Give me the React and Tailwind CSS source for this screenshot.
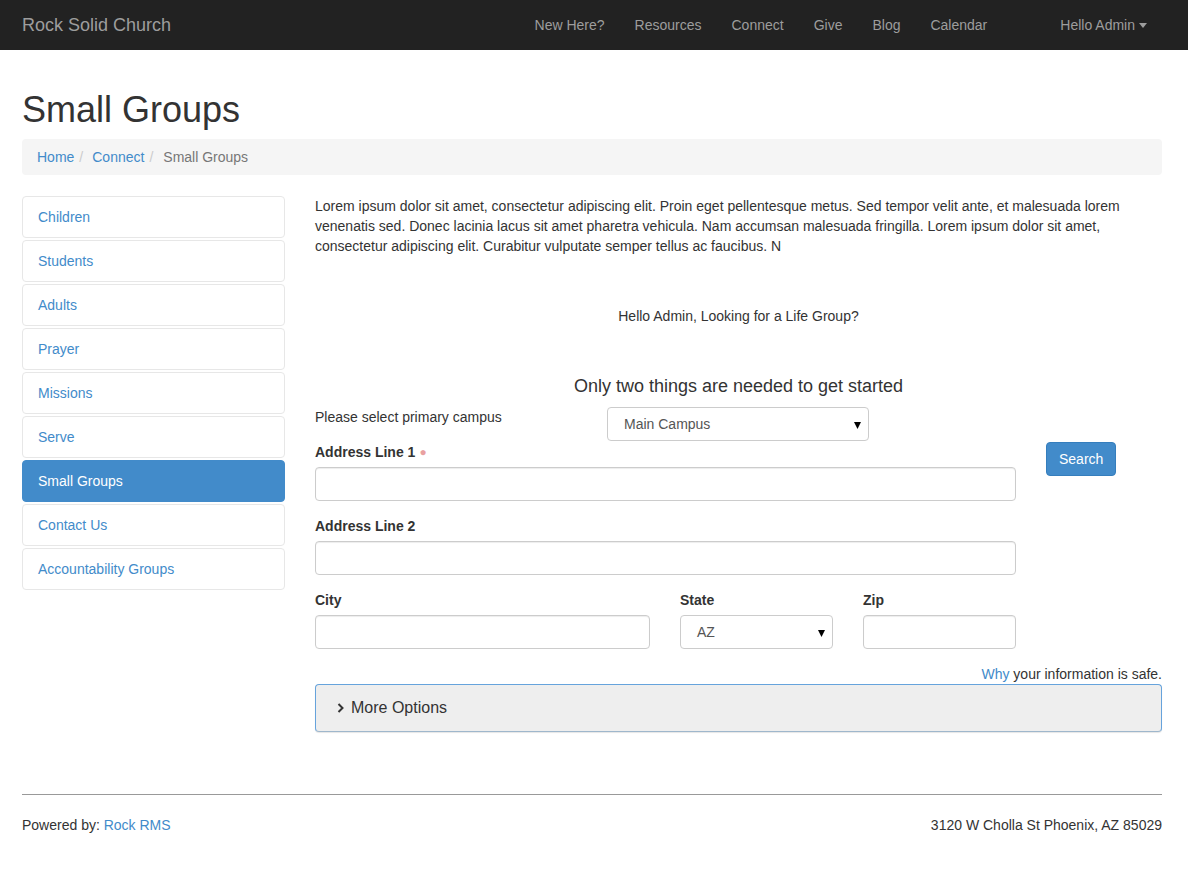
import React from 'react';

const navLinks = ['New Here?', 'Resources', 'Connect', 'Give', 'Blog', 'Calendar'];

const sideLinks = [
    'Children',
    'Students',
    'Adults',
    'Prayer',
    'Missions',
    'Serve',
    'Small Groups',
    'Contact Us',
    'Accountability Groups',
];

const Caret = ({ className = '' }) => (
    <svg width="8" height="5" viewBox="0 0 8 5" className={className}>
        <path d="M0 0 L8 0 L4 5 Z" fill="currentColor" />
    </svg>
);

const FakeSelect = ({ value, className = '' }) => (
    <div className={`relative h-[34px] border border-[#ccc] rounded-[4px] bg-white flex items-center pl-[16px] text-[#555] text-[14px] ${className}`}>
        <span>{value}</span>
        <span className="absolute right-[7px] top-[14px] text-black">
            <svg width="7" height="7" viewBox="0 0 7 7">
                <path d="M0 0 L7 0 L3.5 7 Z" fill="currentColor" />
            </svg>
        </span>
    </div>
);

const Input = ({ className = '' }) => (
    <input
        type="text"
        className={`block h-[34px] border border-[#ccc] rounded-[4px] bg-white px-3 shadow-[inset_0_1px_1px_rgba(0,0,0,0.075)] ${className}`}
    />
);

const Label = ({ children, required }) => (
    <label className="block font-bold text-[14px] leading-[20px] text-[#333] mb-[5px]">
        {children}
        {required && <span className="text-[#e9a1a1] ml-[4px] align-top text-[12px]">●</span>}
    </label>
);

const App = () => {
    return (
        <div className="min-h-screen bg-white font-['Liberation_Sans',Arial,sans-serif] text-[14px] leading-[20px] text-[#333]">
            {/* Navbar */}
            <div className="h-[50px] bg-[#222] flex items-center pl-[22px] pr-[41px]">
                <span className="text-[18px] text-[#9d9d9d]">Rock Solid Church</span>
                <div className="ml-auto flex items-center">
                    {navLinks.map((link) => (
                        <span key={link} className="px-[15px] text-[#9d9d9d]">
                            {link}
                        </span>
                    ))}
                    <span className="ml-[43px] pl-[15px] flex items-center gap-[4px] text-[#9d9d9d]">
                        Hello Admin
                        <Caret />
                    </span>
                </div>
            </div>

            <div className="ml-[22px] mr-[26px]">
                <h1 className="mt-[40px] text-[36px] leading-[40px] text-[#333] font-normal">Small Groups</h1>
                <div className="mt-[9px] h-[36px] bg-[#f5f5f5] rounded-[4px] px-[15px] flex items-center">
                    <span className="text-[#428bca]">Home</span>
                    <span className="px-[5px] text-[#ccc]">/</span>
                    <span className="ml-[4px] text-[#428bca]">Connect</span>
                    <span className="px-[5px] text-[#ccc]">/</span>
                    <span className="ml-[5px] text-[#777]">Small Groups</span>
                </div>

                <div className="mt-[21px] flex gap-[30px]">
                    {/* Sidebar */}
                    <div className="w-[263px] shrink-0 flex flex-col gap-[2px]">
                        {sideLinks.map((link) =>
                            link === 'Small Groups' ? (
                                <div key={link} className="px-[15px] py-[10px] border border-[#428bca] bg-[#428bca] rounded-[4px] text-white">
                                    {link}
                                </div>
                            ) : (
                                <div key={link} className="px-[15px] py-[10px] border border-[#e7e7e7] rounded-[4px] text-[#428bca]">
                                    {link}
                                </div>
                            )
                        )}
                    </div>

                    {/* Main */}
                    <div className="flex-1">
                        <p>
                            Lorem ipsum dolor sit amet, consectetur adipiscing elit. Proin eget pellentesque metus. Sed tempor velit ante, et malesuada lorem venenatis sed. Donec lacinia lacus sit amet pharetra vehicula. Nam accumsan malesuada fringilla. Lorem ipsum dolor sit amet, consectetur adipiscing elit. Curabitur vulputate semper tellus ac faucibus. N
                        </p>

                        <p className="mt-[50px] text-center">Hello Admin, Looking for a Life Group?</p>

                        <h4 className="mt-[50px] text-center text-[18px] leading-[20px] text-[#333]">Only two things are needed to get started</h4>

                        <div className="mt-[11px] grid grid-cols-[292px_262px_1fr]">
                            <div>Please select primary campus</div>
                            <FakeSelect value="Main Campus" />
                        </div>

                        <div className="flex gap-[30px] mt-[1px]">
                            <div className="w-[701px]">
                                <div className="mb-[15px]">
                                    <Label required>Address Line 1</Label>
                                    <Input className="w-full" />
                                </div>
                                <div className="mb-[15px]">
                                    <Label>Address Line 2</Label>
                                    <Input className="w-full" />
                                </div>
                                <div className="flex gap-[30px]">
                                    <div className="w-[335px]">
                                        <Label>City</Label>
                                        <Input className="w-full" />
                                    </div>
                                    <div className="w-[153px]">
                                        <Label>State</Label>
                                        <FakeSelect value="AZ" />
                                    </div>
                                    <div className="w-[153px]">
                                        <Label>Zip</Label>
                                        <Input className="w-full" />
                                    </div>
                                </div>
                            </div>
                            <div>
                                <button className="h-[34px] px-[12px] bg-[#428bca] border border-[#357ebd] rounded-[4px] text-white">
                                    Search
                                </button>
                            </div>
                        </div>

                        <div className="mt-[15px] text-right">
                            <span className="text-[#428bca]">Why</span> your information is safe.
                        </div>

                        <div className="h-[48px] bg-[#eee] border border-[#66a3dc] border-b-[#9fb7cc] rounded-[4px] flex items-center pl-[21px] shadow-[0_1px_1px_rgba(0,0,0,0.1)]">
                            <svg width="7" height="10" viewBox="0 0 7 10" className="mr-[7px] text-[#333]">
                                <path d="M1.5 1 L5.5 5 L1.5 9" stroke="currentColor" strokeWidth="2" fill="none" />
                            </svg>
                            <span className="text-[16px]">More Options</span>
                        </div>
                    </div>
                </div>

                {/* Footer */}
                <div className="mt-[62px] border-t border-[#999]" />
                <div className="mt-[20px] flex justify-between">
                    <div>
                        Powered by: <span className="text-[#428bca]">Rock RMS</span>
                    </div>
                    <div>3120 W Cholla St Phoenix, AZ 85029</div>
                </div>
            </div>
        </div>
    );
};

export default App;
